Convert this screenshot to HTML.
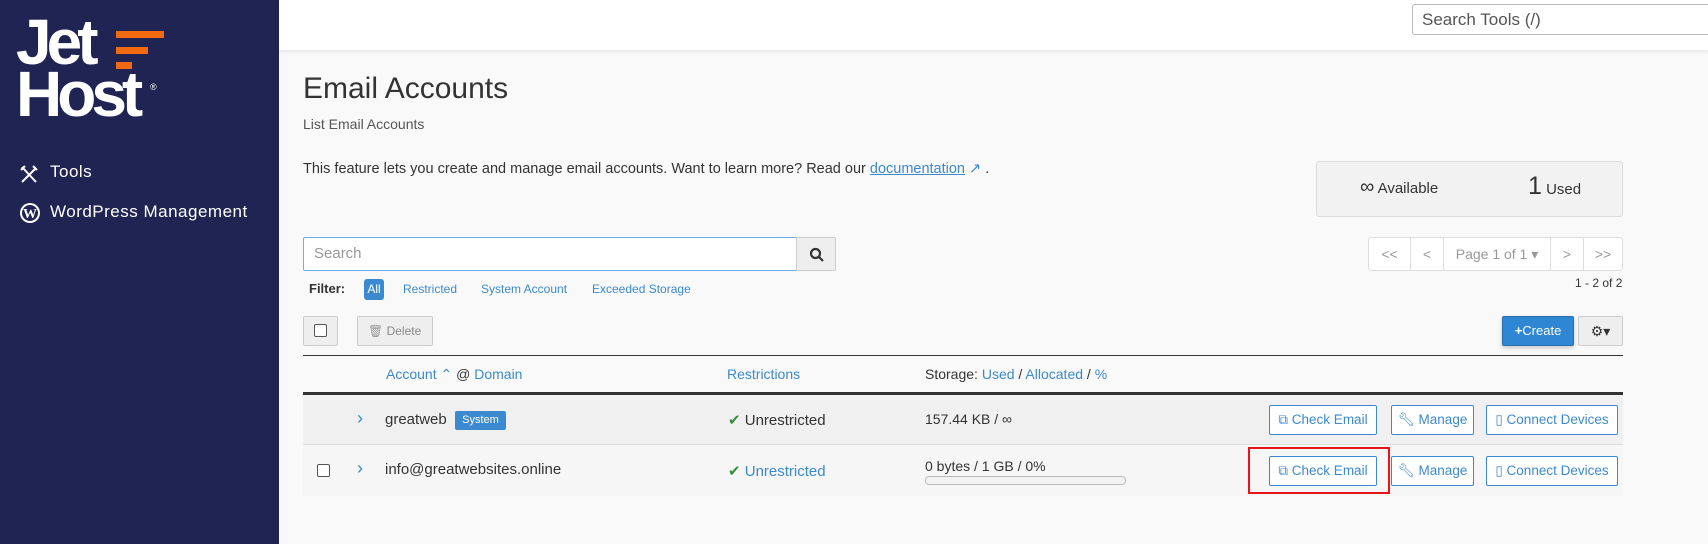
<!DOCTYPE html>
<html><head><meta charset="utf-8"><style>
*{box-sizing:border-box;margin:0;padding:0}
body{width:1708px;height:544px;overflow:hidden;background:#f9f9f9;font-family:"Liberation Sans",sans-serif;color:#333;font-size:15px;position:relative}
.a{position:absolute}
.side{left:0;top:0;width:279px;height:544px;background:#1f2453}
.hdr{left:279px;top:0;width:1429px;height:50px;background:#fff;box-shadow:0 2px 4px rgba(0,0,0,.08)}
.link{color:#3b8ad0}
.btn{position:absolute;border:1px solid #3b8ad0;color:#3b8ad0;background:#fff;font-size:13.5px;display:flex;align-items:center;justify-content:center;gap:5px;border-radius:2px}
.gbtn{position:absolute;border:1px solid #ccc;background:#eee;border-radius:2px}
</style></head><body>
<div class="a side">
  <div class="a" style="left:16px;top:16px;color:#fff;font-weight:bold;font-size:64px;line-height:52px;letter-spacing:-5px">Jet<br>Host</div>
  <div class="a" style="left:150px;top:82px;color:#fff;font-size:9px">®</div>
  <div class="a" style="left:116px;top:31px;width:48px;height:7px;background:#f26a10"></div>
  <div class="a" style="left:116px;top:47px;width:32px;height:7px;background:#f26a10"></div>
  <div class="a" style="left:116px;top:62px;width:16px;height:7px;background:#f26a10"></div>
  <svg class="a" style="left:19px;top:164px" width="20" height="20" viewBox="0 0 20 20" fill="none" stroke="#fff" stroke-width="2"><path d="M3 18L17 4M14 2l4 4M3 3l14 15M2 6l4-4"/></svg>
  <div class="a" style="left:50px;top:162px;color:#fff;font-size:17px;letter-spacing:.5px">Tools</div>
  <svg class="a" style="left:19px;top:202px" width="22" height="22" viewBox="0 0 22 22"><circle cx="11" cy="11" r="10" fill="#fff"/><circle cx="11" cy="11" r="8" fill="#1f2453"/><text x="11" y="16" font-size="14" font-weight="bold" fill="#fff" text-anchor="middle" font-family="Liberation Serif">W</text></svg>
  <div class="a" style="left:50px;top:202px;color:#fff;font-size:17px;letter-spacing:.5px">WordPress Management</div>
</div>
<div class="a hdr"></div>
<div class="a" style="left:1412px;top:4px;width:300px;height:31px;border:1px solid #bbb;border-radius:3px;background:#fff;padding:5px 9px;font-size:17px;color:#555">Search Tools (/)</div>

<div class="a" style="left:303px;top:72px;font-size:30px;color:#333">Email Accounts</div>
<div class="a" style="left:303px;top:116px;font-size:14px;color:#555">List Email Accounts</div>
<div class="a" style="left:303px;top:161px;font-size:14.5px">This feature lets you create and manage email accounts. Want to learn more? Read our <span class="link" style="text-decoration:underline">documentation</span> <span class="link">↗</span> .</div>

<div class="a" style="left:1316px;top:161px;width:307px;height:56px;background:#f2f2f2;border:1px solid #ddd;border-radius:3px"></div>
<div class="a" style="left:1360px;top:176px;font-size:15px"><b style="font-size:20px;font-weight:normal">∞</b> Available</div>
<div class="a" style="left:1528px;top:172px;font-size:15px"><span style="font-size:25px">1</span> Used</div>

<div class="a" style="left:303px;top:237px;width:494px;height:34px;border:1px solid #66afe9;border-radius:2px 0 0 2px;background:#fff;padding:7px 10px;font-size:15px;color:#999">Search</div>
<div class="gbtn" style="left:796px;top:237px;width:40px;height:34px;border-radius:0 2px 2px 0"><svg style="position:absolute;left:12px;top:9px" width="16" height="16" viewBox="0 0 16 16" fill="none" stroke="#333" stroke-width="2.2"><circle cx="6.5" cy="6.5" r="4.5"/><path d="M10 10l4 4"/></svg></div>

<div class="a" style="left:309px;top:281px;font-size:13px;font-weight:bold">Filter:</div>
<div class="a" style="left:364px;top:279px;width:20px;height:21px;background:#3b8ad0;border-radius:3px;color:#fff;font-size:12px;text-align:center;line-height:21px">All</div>
<div class="a link" style="left:403px;top:282px;font-size:12px">Restricted</div>
<div class="a link" style="left:481px;top:282px;font-size:12px">System Account</div>
<div class="a link" style="left:592px;top:282px;font-size:12px">Exceeded Storage</div>

<div class="a" style="left:1368px;top:237px;width:255px;height:34px;border:1px solid #ddd;border-radius:3px;background:#fff;display:flex;color:#999;font-size:14px">
<div style="width:42px;border-right:1px solid #ddd;text-align:center;line-height:32px">&lt;&lt;</div>
<div style="width:33px;border-right:1px solid #ddd;text-align:center;line-height:32px">&lt;</div>
<div style="width:107px;border-right:1px solid #ddd;text-align:center;line-height:32px">Page 1 of 1 ▾</div>
<div style="width:33px;border-right:1px solid #ddd;text-align:center;line-height:32px">&gt;</div>
<div style="flex:1;text-align:center;line-height:32px">&gt;&gt;</div></div>
<div class="a" style="left:1575px;top:276px;font-size:12px">1 - 2 of 2</div>

<div class="gbtn" style="left:303px;top:316px;width:35px;height:30px"><div class="a" style="left:10px;top:7px;width:13px;height:13px;border:1px solid #555;border-radius:2px;background:#fff"></div></div>
<div class="gbtn" style="left:357px;top:316px;width:76px;height:30px;color:#888;font-size:12px;line-height:28px;padding-left:10px"><span style="color:#999">🗑</span> Delete</div>
<div class="a" style="left:1502px;top:316px;width:72px;height:30px;background:#2f86d2;border:1px solid #2a70b0;border-radius:2px;color:#fff;font-size:13px;line-height:28px;text-align:center;box-shadow:0 2px 4px rgba(0,0,0,.2)"><b>+</b>Create</div>
<div class="gbtn" style="left:1578px;top:316px;width:45px;height:30px;font-size:14px;line-height:28px;text-align:center">⚙▾</div>

<div class="a" style="left:303px;top:355px;width:1320px;height:1px;background:#333"></div>
<div class="a" style="left:386px;top:366px;font-size:14px"><span class="link">Account</span> <span class="link">⌃</span> @ <span class="link">Domain</span></div>
<div class="a link" style="left:727px;top:366px;font-size:14px">Restrictions</div>
<div class="a" style="left:925px;top:366px;font-size:14px">Storage: <span class="link">Used</span> / <span class="link">Allocated</span> / <span class="link">%</span></div>
<div class="a" style="left:303px;top:392px;width:1320px;height:3px;background:#333"></div>
<div class="a" style="left:303px;top:395px;width:1320px;height:50px;background:#f0f0f0;border-bottom:1px solid #ddd"></div>
<div class="a" style="left:303px;top:445px;width:1320px;height:51px;background:#f6f6f6"></div>

<div class="a link" style="left:357px;top:408px;font-size:18px">›</div>
<div class="a" style="left:385px;top:411px;font-size:15px">greatweb</div>
<div class="a" style="left:455px;top:411px;width:51px;height:19px;background:#3b8ad0;border-radius:2px;color:#fff;font-size:11px;text-align:center;line-height:19px">System</div>
<div class="a" style="left:728px;top:411px;font-size:15px"><span style="color:#3d8b3d">✔</span> Unrestricted</div>
<div class="a" style="left:925px;top:411px;font-size:14px">157.44 KB / ∞</div>

<div class="a" style="left:317px;top:464px;width:13px;height:13px;border:1px solid #555;border-radius:2px;background:#fff"></div>
<div class="a link" style="left:357px;top:458px;font-size:18px">›</div>
<div class="a" style="left:385px;top:461px;font-size:15px">info@greatwebsites.online</div>
<div class="a" style="left:728px;top:462px;font-size:15px"><span style="color:#3d8b3d">✔</span> <span class="link">Unrestricted</span></div>
<div class="a" style="left:925px;top:458px;font-size:14px">0 bytes / 1 GB / 0%</div>
<div class="a" style="left:925px;top:476px;width:201px;height:9px;border:1px solid #bbb;border-radius:4px;background:#f3f3f3"></div>

<div class="btn" style="left:1269px;top:405px;width:108px;height:30px">⧉ Check Email</div>
<div class="btn" style="left:1391px;top:405px;width:83px;height:30px">🔧︎ Manage</div>
<div class="btn" style="left:1486px;top:405px;width:132px;height:30px">▯ Connect Devices</div>
<div class="btn" style="left:1269px;top:456px;width:108px;height:30px">⧉ Check Email</div>
<div class="btn" style="left:1391px;top:456px;width:83px;height:30px">🔧︎ Manage</div>
<div class="btn" style="left:1486px;top:456px;width:132px;height:30px">▯ Connect Devices</div>
<div class="a" style="left:1248px;top:447px;width:142px;height:47px;border:2px solid #e8141a"></div>
</body></html>
